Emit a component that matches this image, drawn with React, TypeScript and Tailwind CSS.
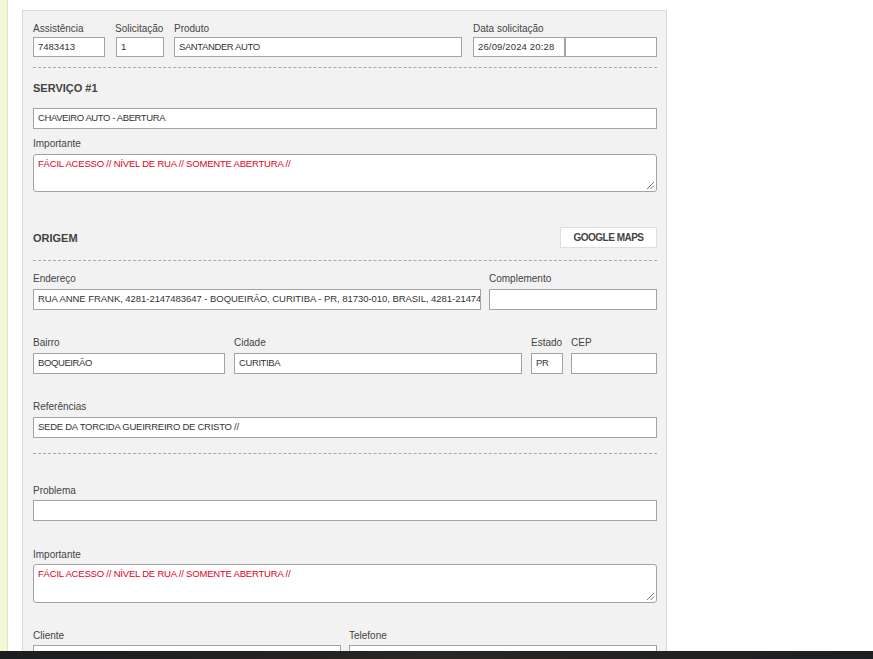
import React from "react";

const font = { fontFamily: '"Liberation Sans", Arial, sans-serif' };

function Label({ children }: { children?: React.ReactNode }) {
  return <div className="text-[10px] leading-[14px] pt-[1px] text-[#444] whitespace-nowrap">{children}</div>;
}

function Input({
  value = "",
  className = "",
  h = "h-[21px]",
  tr = "tracking-[-0.4px]",
}: {
  value?: string;
  className?: string;
  h?: string;
  tr?: string;
}) {
  return (
    <div className={`${h} ${tr} border border-[#a3a3a3] bg-white pl-[4px] text-[9.5px] text-[#333] flex items-center whitespace-nowrap overflow-hidden ${className}`}>
      {value}
    </div>
  );
}

function TextArea({ value, h }: { value: string; h: string }) {
  return (
    <div className={`relative ${h} border border-[#a3a3a3] rounded-[3px] bg-white pl-[4px] pt-[2px] text-[9.5px] tracking-[-0.2px] leading-[13px] text-[#e0001b] whitespace-nowrap`}>
      {value}
      <svg className="absolute right-[1px] bottom-[1px]" width="9" height="9" viewBox="0 0 9 9">
        <line x1="8" y1="1" x2="1" y2="8" stroke="#777" strokeWidth="1" />
        <line x1="8" y1="4.5" x2="4.5" y2="8" stroke="#777" strokeWidth="1" />
      </svg>
    </div>
  );
}

function Dashed({ className = "" }: { className?: string }) {
  return <div className={`border-t border-dashed border-[#a8a8a8] ${className}`} />;
}

export default function App() {
  const imp = "FÁCIL ACESSO // NÍVEL DE RUA // SOMENTE ABERTURA //";
  return (
    <div className="w-[873px] h-[659px] overflow-hidden bg-white flex relative" style={font}>
      <div className="w-[8px] h-full bg-[#f4f8d9] border-r border-[#dfe6bd] shrink-0" />
      <div className="ml-[14px] mt-[10px] w-[645px] bg-[#f2f2f2] border border-[#d9d9d9] border-b-0 pl-[10px] pr-[9px] pt-[10px] shrink-0 self-start h-[700px]">
        {/* Row 1 */}
        <div className="flex">
          <div className="w-[72px]">
            <Label>Assistência</Label>
            <Input value="7483413" h="h-[20px]" tr="tracking-[0px]" className="mt-[1px]" />
          </div>
          <div className="w-[49px] ml-[10px]">
            <Label>Solicitação</Label>
            <Input value="1" h="h-[20px]" className="mt-[1px] ml-[1px] w-[48px]" />
          </div>
          <div className="w-[288px] ml-[10px]">
            <Label>Produto</Label>
            <Input value="SANTANDER AUTO" h="h-[20px]" className="mt-[1px]" />
          </div>
          <div className="ml-[11px]">
            <Label>Data solicitação</Label>
            <div className="flex mt-[1px]">
              <Input value="26/09/2024 20:28" h="h-[20px]" tr="tracking-[0.15px]" className="w-[92px]" />
              <Input value="" h="h-[20px]" className="w-[92px]" />
            </div>
          </div>
        </div>
        <Dashed className="mt-[10px]" />

        <div className="mt-[13px] text-[11px] leading-[14px] font-bold text-[#444]">SERVIÇO #1</div>
        <Input value="CHAVEIRO AUTO - ABERTURA" className="mt-[13px]" />
        <div className="mt-[7px]">
          <Label>Importante</Label>
        </div>
        <div className="mt-[3px]">
          <TextArea value={imp} h="h-[38px]" />
        </div>

        <div className="mt-[35px] flex items-center justify-between h-[21px]">
          <div className="text-[11px] font-bold text-[#444] pt-[1px]">ORIGEM</div>
          <div className="w-[97px] h-[21px] bg-white border border-[#dedede] flex items-center justify-center text-[10px] tracking-[-0.5px] font-bold text-[#444]">
            GOOGLE MAPS
          </div>
        </div>
        <Dashed className="mt-[12px]" />

        <div className="mt-[10px] flex gap-[8px]">
          <div className="w-[448px]">
            <Label>Endereço</Label>
            <Input
              value="RUA ANNE FRANK, 4281-2147483647 - BOQUEIRÃO, CURITIBA - PR, 81730-010, BRASIL, 4281-21474"
              tr="tracking-[-0.05px]"
              className="mt-[3px]"
            />
          </div>
          <div className="w-[168px]">
            <Label>Complemento</Label>
            <Input className="mt-[3px]" />
          </div>
        </div>

        <div className="mt-[25px] flex">
          <div className="w-[192px]">
            <Label>Bairro</Label>
            <Input value="BOQUEIRÃO" className="mt-[3px]" />
          </div>
          <div className="w-[288px] ml-[9px]">
            <Label>Cidade</Label>
            <Input value="CURITIBA" className="mt-[3px]" />
          </div>
          <div className="w-[32px] ml-[9px]">
            <Label>Estado</Label>
            <Input value="PR" className="mt-[3px]" />
          </div>
          <div className="w-[86px] ml-[8px]">
            <Label>CEP</Label>
            <Input className="mt-[3px]" />
          </div>
        </div>

        <div className="mt-[25px]">
          <Label>Referências</Label>
          <Input value="SEDE DA TORCIDA GUEIRREIRO DE CRISTO //" tr="tracking-[-0.25px]" className="mt-[3px]" />
        </div>
        <Dashed className="mt-[15px]" />

        <div className="mt-[29px]">
          <Label>Problema</Label>
          <Input className="mt-[2px]" />
        </div>

        <div className="mt-[26px]">
          <Label>Importante</Label>
          <div className="mt-[2px]">
            <TextArea value={imp} h="h-[39px]" />
          </div>
        </div>

        <div className="mt-[25px] flex gap-[8px]">
          <div className="w-[308px]">
            <Label>Cliente</Label>
            <Input className="mt-[2px]" />
          </div>
          <div className="w-[308px]">
            <Label>Telefone</Label>
            <Input className="mt-[2px]" />
          </div>
        </div>
      </div>
      <div className="absolute left-0 right-0 bottom-0 h-[8px] bg-gradient-to-r from-[#1b1d20] via-[#2a2623] to-[#1d1f22]" />
    </div>
  );
}
